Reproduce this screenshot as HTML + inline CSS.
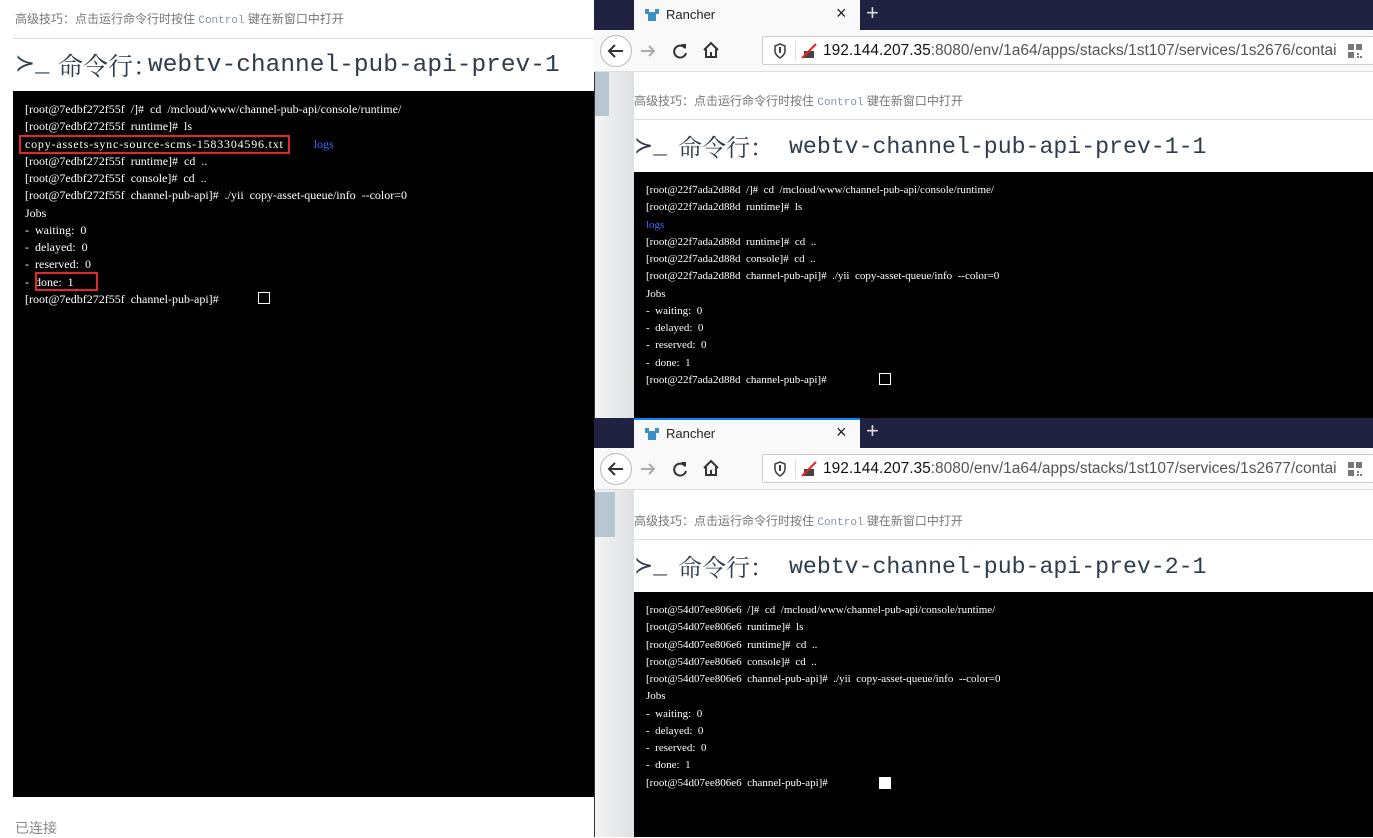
<!DOCTYPE html>
<html><head><meta charset="utf-8">
<style>
*{margin:0;padding:0;box-sizing:border-box}
body{width:1373px;height:837px;overflow:hidden;background:#fff;position:relative;font-family:"Liberation Sans","Noto Sans CJK SC",sans-serif}
.abs{position:absolute}
.hint{position:absolute;font-size:12px;color:#777;white-space:nowrap;font-family:"Liberation Sans","Noto Sans CJK SC",sans-serif}
.hint code{font-family:"Liberation Mono",monospace;color:#8a93a8;font-size:11px}
.rule{position:absolute;height:1px;background:#ddd}
.t{position:absolute;white-space:nowrap;color:#2e3c4e;font-family:"Liberation Mono",monospace;line-height:32px}
.t.cn{font-family:"Noto Serif CJK SC",serif}
.term{position:absolute;background:#000;color:#fff;font-family:"Liberation Serif","Noto Serif CJK SC",serif;overflow:hidden}
.term div{height:17.25px;line-height:17.25px;white-space:pre}
.blue{color:#3a6cff}
.red{position:absolute;border:2px solid #e2262b}
.cur{position:absolute;border:1px solid #fff;width:12px;height:12px}
.tabbar{position:absolute;left:594px;width:779px;height:30px;background:#1f2240}
.tab{position:absolute;left:40px;top:0;width:226px;height:30px;background:#f9f9fa;font-size:13px;color:#222}
.toolbar{position:absolute;left:594px;width:779px;height:42px;background:#f9f9fa;border-bottom:1px solid #ddd}
.url{position:absolute;left:168px;top:6px;width:612px;height:29px;background:#fff;border:1px solid #ccc;border-radius:2px;font-size:15.5px;line-height:27px;white-space:nowrap;overflow:hidden;color:#111}
.strip{position:absolute;left:594px;width:40px;background:linear-gradient(90deg,#f4f4f4,#e7e8e9 60%,#dfe0e1);border-left:1px solid #333}
</style></head><body>

<!-- LEFT PAGE -->
<div class="hint" style="left:15px;top:10px">高级技巧：点击运行命令行时按住 <code>Control</code> 键在新窗口中打开</div>
<div class="rule" style="left:13px;top:38px;width:581px"></div>
<div class="t" style="left:15px;top:50px;font-size:24px">≻_</div>
<div class="t cn" style="left:58px;top:49px;font-size:25px">命令行：</div>
<div class="t" style="left:148px;top:50px;font-size:24.5px">webtv-channel-pub-api-prev-1</div>
<div class="term" style="left:13px;top:91px;width:581px;height:706px;padding:10px 0 0 12px;font-size:12px"><div>[root@7edbf272f55f  /]#  cd  /mcloud/www/channel-pub-api/console/runtime/</div><div>[root@7edbf272f55f  runtime]#  ls</div><div><span style="letter-spacing:0.8px">copy-assets-sync-source-scms-1583304596.txt</span>          <span class="blue">logs</span></div><div>[root@7edbf272f55f  runtime]#  cd  ..</div><div>[root@7edbf272f55f  console]#  cd  ..</div><div>[root@7edbf272f55f  channel-pub-api]#  ./yii  copy-asset-queue/info  --color=0</div><div>Jobs</div><div>-  waiting:  0</div><div>-  delayed:  0</div><div>-  reserved:  0</div><div>-  done:  1</div><div>[root@7edbf272f55f  channel-pub-api]# </div></div>
<div class="red" style="left:19px;top:135px;width:271px;height:19px"></div>
<div class="red" style="left:35px;top:272px;width:63px;height:19px"></div>
<div class="cur" style="left:258px;top:292px"></div>
<div class="abs" style="left:15px;top:818px;font-size:14px;color:#888">已连接</div>

<!-- WINDOW 1 -->
<div class="tabbar" style="top:0"><div class="tab"><svg class="abs" style="left:10px;top:8px" width="16" height="14" viewBox="0 0 16 14"><path d="M1 1h4v3h6V1h4v5h-3v7H4V6H1z" fill="#3d8fc6"/></svg><span class="abs" style="left:32px;top:7px">Rancher</span><span class="abs" style="left:202px;top:3px;font-size:18px">×</span></div><span class="abs" style="left:272px;top:0px;color:#ddd;font-size:22px">+</span></div>
<div class="toolbar" style="top:30px">
<svg class="abs" style="left:5px;top:4px" width="34" height="34"><circle cx="17" cy="17" r="15.5" fill="#fff" stroke="#bbb"/><path d="M24 17H11M16 11l-6 6 6 6" stroke="#333" stroke-width="2" fill="none"/></svg>
<svg class="abs" style="left:45px;top:12px" width="18" height="18"><path d="M2 9h13M10 4l5 5-5 5" stroke="#aaa" stroke-width="2" fill="none"/></svg>
<svg class="abs" style="left:77px;top:12px" width="18" height="18"><path d="M14 6A6 6 0 1 0 15 11" stroke="#333" stroke-width="2" fill="none"/><path d="M10 2l5 0 0 5z" fill="#333"/></svg>
<svg class="abs" style="left:108px;top:11px" width="18" height="18"><path d="M2 9L9 2l7 7M4 8v8h10V8" stroke="#333" stroke-width="2" fill="none"/><rect x="8" y="11" width="2" height="5" fill="#333"/></svg>
<div class="url"><svg class="abs" style="left:10px;top:6px" width="14" height="16"><path d="M7 1l5 2v5c0 3-2 5-5 7-3-2-5-4-5-7V3z" stroke="#444" stroke-width="1.6" fill="none"/><rect x="6" y="4" width="2" height="6" fill="#444"/></svg><span class="abs" style="left:32px;top:4px;width:1px;height:20px;background:#ddd"></span><svg class="abs" style="left:38px;top:6px" width="16" height="16"><path d="M3 15V8h10v7z" fill="#444"/><path d="M1 15L15 1" stroke="#e22" stroke-width="2"/></svg><span class="abs" style="left:60px;top:0">192.144.207.35<span style="color:#555">:8080/env/1a64/apps/stacks/1st107/services/1s2676/contai</span></span><svg class="abs" style="left:584px;top:6px" width="16" height="16"><path d="M1 1h6v6H1zM9 1h6v6H9zM1 9h6v6H1zM10 10h2v2h-2zM13 13h2v2h-2zM10 13h2v2h-2z" fill="#777"/></svg></div>
</div>
<div class="strip" style="top:72px;height:346px"><div class="abs" style="left:0;top:0;width:14px;height:44px;background:#b7c7d1"></div></div>
<div class="hint" style="left:634px;top:92px">高级技巧：点击运行命令行时按住 <code>Control</code> 键在新窗口中打开</div>
<div class="rule" style="left:634px;top:119px;width:739px"></div>
<div class="t" style="left:634px;top:131px;font-size:23px">≻_</div>
<div class="t cn" style="left:678px;top:130px;font-size:24px">命令行：</div>
<div class="t" style="left:789px;top:131px;font-size:23.2px">webtv-channel-pub-api-prev-1-1</div>
<div class="term" style="left:634px;top:172px;width:739px;height:246px;padding:10px 0 0 12px;font-size:11px"><div>[root@22f7ada2d88d  /]#  cd  /mcloud/www/channel-pub-api/console/runtime/</div><div>[root@22f7ada2d88d  runtime]#  ls</div><div class="blue">logs</div><div>[root@22f7ada2d88d  runtime]#  cd  ..</div><div>[root@22f7ada2d88d  console]#  cd  ..</div><div>[root@22f7ada2d88d  channel-pub-api]#  ./yii  copy-asset-queue/info  --color=0</div><div>Jobs</div><div>-  waiting:  0</div><div>-  delayed:  0</div><div>-  reserved:  0</div><div>-  done:  1</div><div>[root@22f7ada2d88d  channel-pub-api]# </div></div>
<div class="cur" style="left:879px;top:373px"></div>

<!-- WINDOW 2 -->
<div class="tabbar" style="top:418px"><div class="tab" style="border-top:2px solid #0a84ff"><svg class="abs" style="left:10px;top:7px" width="16" height="14" viewBox="0 0 16 14"><path d="M1 1h4v3h6V1h4v5h-3v7H4V6H1z" fill="#3d8fc6"/></svg><span class="abs" style="left:32px;top:6px">Rancher</span><span class="abs" style="left:202px;top:2px;font-size:18px">×</span></div><span class="abs" style="left:272px;top:0px;color:#ddd;font-size:22px">+</span></div>
<div class="toolbar" style="top:448px">
<svg class="abs" style="left:5px;top:4px" width="34" height="34"><circle cx="17" cy="17" r="15.5" fill="#fff" stroke="#bbb"/><path d="M24 17H11M16 11l-6 6 6 6" stroke="#333" stroke-width="2" fill="none"/></svg>
<svg class="abs" style="left:45px;top:12px" width="18" height="18"><path d="M2 9h13M10 4l5 5-5 5" stroke="#aaa" stroke-width="2" fill="none"/></svg>
<svg class="abs" style="left:77px;top:12px" width="18" height="18"><path d="M14 6A6 6 0 1 0 15 11" stroke="#333" stroke-width="2" fill="none"/><path d="M10 2l5 0 0 5z" fill="#333"/></svg>
<svg class="abs" style="left:108px;top:11px" width="18" height="18"><path d="M2 9L9 2l7 7M4 8v8h10V8" stroke="#333" stroke-width="2" fill="none"/><rect x="8" y="11" width="2" height="5" fill="#333"/></svg>
<div class="url"><svg class="abs" style="left:10px;top:6px" width="14" height="16"><path d="M7 1l5 2v5c0 3-2 5-5 7-3-2-5-4-5-7V3z" stroke="#444" stroke-width="1.6" fill="none"/><rect x="6" y="4" width="2" height="6" fill="#444"/></svg><span class="abs" style="left:32px;top:4px;width:1px;height:20px;background:#ddd"></span><svg class="abs" style="left:38px;top:6px" width="16" height="16"><path d="M3 15V8h10v7z" fill="#444"/><path d="M1 15L15 1" stroke="#e22" stroke-width="2"/></svg><span class="abs" style="left:60px;top:0">192.144.207.35<span style="color:#555">:8080/env/1a64/apps/stacks/1st107/services/1s2677/contai</span></span><svg class="abs" style="left:584px;top:6px" width="16" height="16"><path d="M1 1h6v6H1zM9 1h6v6H9zM1 9h6v6H1zM10 10h2v2h-2zM13 13h2v2h-2zM10 13h2v2h-2z" fill="#777"/></svg></div>
</div>
<div class="strip" style="top:490px;height:347px"><div class="abs" style="left:0;top:2px;width:20px;height:45px;background:#b7c7d1"></div></div>
<div class="hint" style="left:634px;top:512px">高级技巧：点击运行命令行时按住 <code>Control</code> 键在新窗口中打开</div>
<div class="rule" style="left:634px;top:539px;width:739px"></div>
<div class="t" style="left:634px;top:551px;font-size:23px">≻_</div>
<div class="t cn" style="left:678px;top:550px;font-size:24px">命令行：</div>
<div class="t" style="left:789px;top:551px;font-size:23.2px">webtv-channel-pub-api-prev-2-1</div>
<div class="term" style="left:634px;top:592px;width:739px;height:245px;padding:10px 0 0 12px;font-size:11px"><div>[root@54d07ee806e6  /]#  cd  /mcloud/www/channel-pub-api/console/runtime/</div><div>[root@54d07ee806e6  runtime]#  ls</div><div>[root@54d07ee806e6  runtime]#  cd  ..</div><div>[root@54d07ee806e6  console]#  cd  ..</div><div>[root@54d07ee806e6  channel-pub-api]#  ./yii  copy-asset-queue/info  --color=0</div><div>Jobs</div><div>-  waiting:  0</div><div>-  delayed:  0</div><div>-  reserved:  0</div><div>-  done:  1</div><div>[root@54d07ee806e6  channel-pub-api]# </div></div>
<div class="abs" style="left:879px;top:777px;width:12px;height:12px;background:#fff"></div>
</body></html>
